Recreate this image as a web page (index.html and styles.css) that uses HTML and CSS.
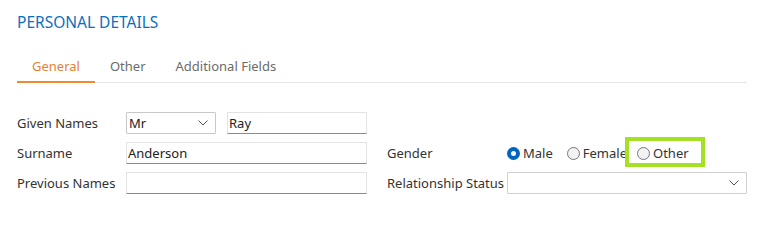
FILE: index.html
```html
<!DOCTYPE html>
<html>
<head>
<meta charset="utf-8">
<link rel="stylesheet" href="styles.css">
</head>
<body>
<div class="page">
  <h1 class="title">PERSONAL DETAILS</h1>
  <div class="tabs">
    <div class="tab active">General</div>
    <div class="tab">Other</div>
    <div class="tab">Additional Fields</div>
  </div>
  <div class="form">
    <div class="label">Given Names</div>
    <div class="field names">
      <div class="select small"><span>Mr</span><svg class="chev" width="10" height="6" viewBox="0 0 10 6"><path d="M0.5 0.5 L5 5 L9.5 0.5" fill="none" stroke="#555" stroke-width="1"/></svg></div>
      <div class="input">Ray</div>
    </div>
    <div></div>
    <div></div>

    <div class="label">Surname</div>
    <div class="field"><div class="input">Anderson</div></div>
    <div class="label right">Gender</div>
    <div class="field radios">
      <label class="radio"><span class="dot checked"></span>Male</label>
      <label class="radio tight"><span class="dot"></span>Female</label>
      <label class="radio"><span class="dot"></span>Other<span class="highlight"></span></label>
    </div>

    <div class="label">Previous Names</div>
    <div class="field"><div class="input"></div></div>
    <div class="label right">Relationship Status</div>
    <div class="field"><div class="select"><span></span><svg class="chev" width="10" height="6" viewBox="0 0 10 6"><path d="M0.5 0.5 L5 5 L9.5 0.5" fill="none" stroke="#555" stroke-width="1"/></svg></div></div>
  </div>
</div>
</body>
</html>
```

FILE: styles.css
```css
html, body {
  margin: 0;
  padding: 0;
  background: #ffffff;
}
body {
  font-family: "Noto Sans", "Open Sans", sans-serif;
  font-size: 13px;
  color: #333333;
}
.page {
  padding: 12px 11px 0 17px;
}
.title {
  margin: 0;
  font-size: 15.5px;
  font-weight: normal;
  color: #0a6fc2;
  line-height: 20px;
}
.tabs {
  display: flex;
  margin-top: 16px;
  border-bottom: 1px solid #e6e6e6;
  height: 34px;
}
.tab {
  padding: 9px 15px 0 15px;
  font-size: 13px;
  line-height: 19px;
  color: #6b6b6b;
  box-sizing: border-box;
  height: 35px;
}
.tab.active {
  color: #e8812f;
  border-bottom: 2px solid #f08a30;
}
.form {
  display: grid;
  grid-template-columns: 109px 241px 140px 240px;
  row-gap: 8px;
  margin-top: 29px;
  grid-auto-rows: 22px;
}
.label {
  line-height: 22px;
  color: #333333;
  white-space: nowrap;
}
.label.right {
  padding-left: 20px;
}
.field {
  display: flex;
  align-items: center;
}
.field.names {
  gap: 11px;
}
.input {
  box-sizing: border-box;
  height: 22px;
  flex: 1;
  border: 1px solid #e3e3e3;
  border-bottom-color: #8a8a8a;
  padding: 0 1px;
  line-height: 20px;
  color: #222222;
  font-size: 13px;
}
.select {
  box-sizing: border-box;
  height: 22px;
  flex: 1;
  border: 1px solid #d0d0d0;
  border-radius: 1px;
  display: flex;
  align-items: center;
  justify-content: space-between;
  padding: 0 7px 0 2px;
  color: #222222;
  font-size: 13px;
  line-height: 20px;
  background: #ffffff;
}
.select.small {
  flex: 0 0 90px;
  border-color: #c8c8c8;
}
.chev {
  display: block;
}
.radio {
  display: flex;
  align-items: center;
  font-size: 13px;
  line-height: 19px;
  color: #333333;
  margin-right: 14px;
  position: relative;
  white-space: nowrap;
}
.radio.tight {
  margin-right: 10px;
}
.radio:last-child {
  margin-right: 0;
}
.dot {
  box-sizing: border-box;
  width: 13px;
  height: 13px;
  border-radius: 50%;
  border: 1px solid #777777;
  background: #f3f3f3;
  margin-right: 3px;
}
.dot.checked {
  border: 4px solid #0563c1;
  background: #ffffff;
}
.highlight {
  position: absolute;
  left: -12px;
  top: -7px;
  width: 80px;
  height: 30px;
  box-sizing: border-box;
  border: 4px solid #a4e024;
}
```
